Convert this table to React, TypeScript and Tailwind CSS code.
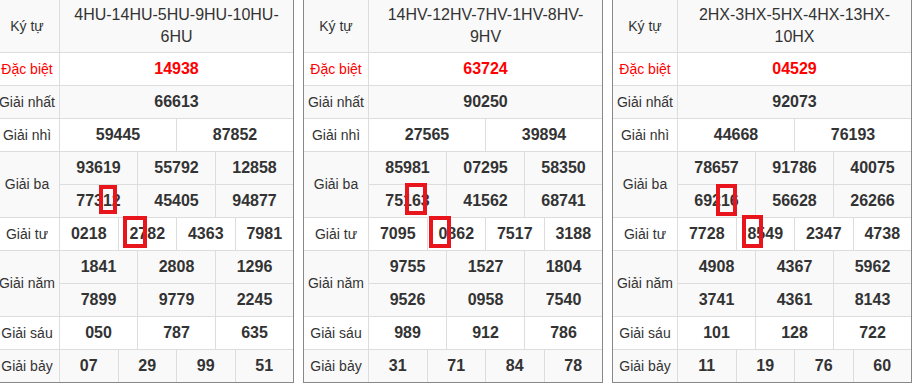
import React from "react";

type Mark = { idx: number; box: React.ReactNode };
type Val = string | { text: string; mark: Mark };

type T = {
  header: string;
  db: string;
  g1: string;
  g2: Val[];
  g3: Val[];
  g4: Val[];
  g5: Val[];
  g6: Val[];
  g7: Val[];
};

const boxCls = "pointer-events-none absolute border-[4px] border-[#e8151d]";

const tables: T[] = [
  {
    header: "4HU-14HU-5HU-9HU-10HU-6HU",
    db: "14938",
    g1: "66613",
    g2: ["59445", "87852"],
    g3: [
      "93619",
      "55792",
      "12858",
      { text: "77312", mark: { idx: 3, box: <span className={boxCls + " left-[-4px] top-[-4px] w-[18px] h-[29px]"} /> } },
      "45405",
      "94877",
    ],
    g4: [
      "0218",
      { text: "2782", mark: { idx: 0, box: <span className={boxCls + " left-[-6px] top-[-6px] w-[24px] h-[32px]"} /> } },
      "4363",
      "7981",
    ],
    g5: ["1841", "2808", "1296", "7899", "9779", "2245"],
    g6: ["050", "787", "635"],
    g7: ["07", "29", "99", "51"],
  },
  {
    header: "14HV-12HV-7HV-1HV-8HV-9HV",
    db: "63724",
    g1: "90250",
    g2: ["27565", "39894"],
    g3: [
      "85981",
      "07295",
      "58350",
      { text: "75163", mark: { idx: 3, box: <span className={boxCls + " left-[-7px] top-[-6px] w-[22px] h-[32px]"} /> } },
      "41562",
      "68741",
    ],
    g4: [
      "7095",
      { text: "0862", mark: { idx: 0, box: <span className={boxCls + " left-[-9px] top-[-6px] w-[22px] h-[32px]"} /> } },
      "7517",
      "3188",
    ],
    g5: ["9755", "1527", "1804", "9526", "0958", "7540"],
    g6: ["989", "912", "786"],
    g7: ["31", "71", "84", "78"],
  },
  {
    header: "2HX-3HX-5HX-4HX-13HX-10HX",
    db: "04529",
    g1: "92073",
    g2: ["44668", "76193"],
    g3: [
      "78657",
      "91786",
      "40075",
      { text: "69216", mark: { idx: 3, box: <span className={boxCls + " left-[-5px] top-[-5px] w-[21px] h-[32px]"} /> } },
      "56628",
      "26266",
    ],
    g4: [
      "7728",
      { text: "8549", mark: { idx: 0, box: <span className={boxCls + " left-[-5px] top-[-7px] w-[21px] h-[33px]"} /> } },
      "2347",
      "4738",
    ],
    g5: ["4908", "4367", "5962", "3741", "4361", "8143"],
    g6: ["101", "128", "722"],
    g7: ["11", "19", "76", "60"],
  },
];

function Num({ v }: { v: Val }) {
  if (typeof v === "string") return <>{v}</>;
  const { text, mark } = v;
  return (
    <>
      {text.slice(0, mark.idx)}
      <span className="relative">
        {text[mark.idx]}
        {mark.box}
      </span>
      {text.slice(mark.idx + 1)}
    </>
  );
}

function Cells({ vals, last }: { vals: Val[]; last?: boolean }) {
  return (
    <div className={"flex " + (last ? "h-[32px]" : "h-[33px] border-b border-[#dddddd]")}>
      {vals.map((v, i) => (
        <div
          key={i}
          className={
            "flex flex-1 basis-0 items-center justify-center text-[16px] font-bold text-[#333333] " +
            (i < vals.length - 1 ? "border-r border-[#dddddd]" : "")
          }
        >
          <Num v={v} />
        </div>
      ))}
    </div>
  );
}

function Row({
  label,
  red,
  gray,
  children,
  last,
}: {
  label: string;
  red?: boolean;
  gray?: boolean;
  children: React.ReactNode;
  last?: boolean;
}) {
  return (
    <div className={"flex " + (gray ? "bg-[#f9f9f9] " : "bg-white ") + (last ? "" : "border-b border-[#dddddd]")}>
      <div
        className={
          "flex w-[65px] shrink-0 items-center justify-center border-r border-[#dddddd] text-[14px] " +
          (red ? "text-[#ff0000]" : "text-[#333333]")
        }
      >
        {label}
      </div>
      <div className="flex-1 min-w-0">{children}</div>
    </div>
  );
}

function Single({ v, red }: { v: string; red?: boolean }) {
  return (
    <div
      className={
        "flex h-[32px] items-center justify-center text-[16px] font-bold " +
        (red ? "text-[#ff0000]" : "text-[#333333]")
      }
    >
      {v}
    </div>
  );
}

function Table({ t }: { t: T }) {
  return (
    <div className="w-[300px] shrink-0 border border-t-0 border-[#888888] bg-white">
      <div className="flex h-[53px] border-b border-[#dddddd] bg-[#f9f9f9]">
        <div className="flex w-[65px] shrink-0 items-center justify-center border-r border-[#dddddd] text-[14px] text-[#333333]">
          Ký tự
        </div>
        <div className="flex flex-1 items-center justify-center px-[8px] text-center text-[16px] leading-[22px] text-[#333333]">
          {t.header}
        </div>
      </div>
      <Row label="Đặc biệt" red>
        <Single v={t.db} red />
      </Row>
      <Row label="Giải nhất" gray>
        <Single v={t.g1} />
      </Row>
      <Row label="Giải nhì">
        <Cells vals={t.g2} last />
      </Row>
      <Row label="Giải ba" gray>
        <Cells vals={t.g3.slice(0, 3)} />
        <Cells vals={t.g3.slice(3)} last />
      </Row>
      <Row label="Giải tư">
        <Cells vals={t.g4} last />
      </Row>
      <Row label="Giải năm" gray>
        <Cells vals={t.g5.slice(0, 3)} />
        <Cells vals={t.g5.slice(3)} last />
      </Row>
      <Row label="Giải sáu">
        <Cells vals={t.g6} last />
      </Row>
      <Row label="Giải bảy" gray last>
        <Cells vals={t.g7} last />
      </Row>
    </div>
  );
}

export default function App() {
  return (
    <div
      className="h-[388px] w-[914px] overflow-hidden bg-white"
      style={{ fontFamily: '"Liberation Sans", Arial, sans-serif' }}
    >
      <div className="ml-[-6px] flex items-start gap-[9px]">
        {tables.map((t, i) => (
          <Table key={i} t={t} />
        ))}
      </div>
    </div>
  );
}
